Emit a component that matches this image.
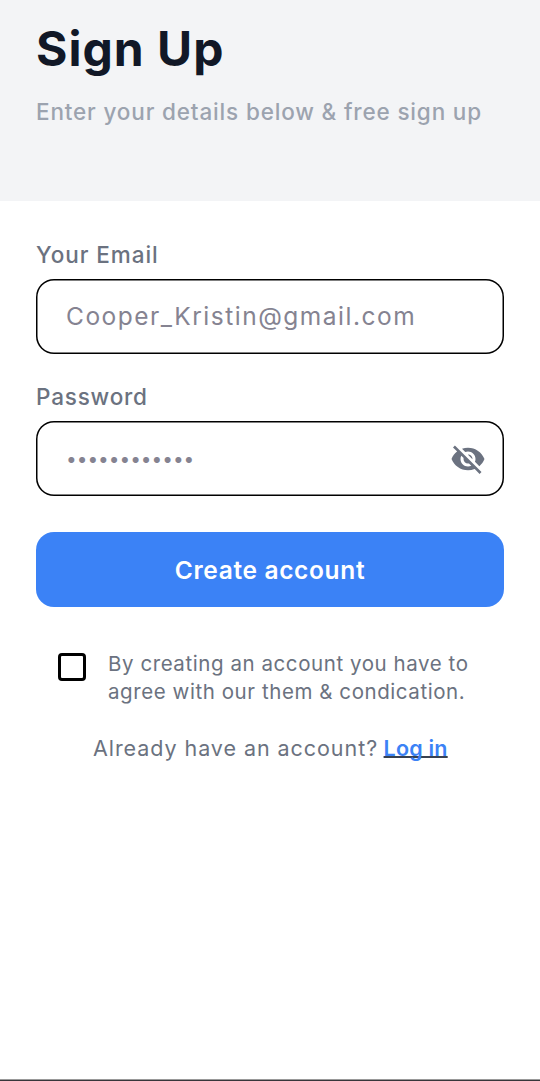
<main>
  <header>
    <h1>Sign Up</h1>
    <p>Enter your details below &amp; free sign up</p>
  </header>
  <form>
    <label for="email">Your Email</label>
    <div class="field" id="email">Cooper_Kristin@gmail.com</div>
    <label class="second" for="password">Password</label>
    <div class="field" id="password">
      <span class="dots">••••••••••••</span>
      <svg viewBox="0 0 24 24" width="36" height="36" aria-hidden="true">
        <path fill="#6b7280" d="M12 7c2.760 0 5 2.240 5 5 0 .65-.13 1.260-.36 1.830l2.920 2.920c1.510-1.260 2.700-2.890 3.430-4.750-1.730-4.390-6-7.500-11-7.500-1.400 0-2.740.25-3.980.7l2.160 2.160C10.740 7.130 11.350 7 12 7zM2 4.270l2.280 2.280.46.46C3.080 8.300 1.780 10.020 1 12c1.730 4.390 6 7.500 11 7.500 1.550 0 3.030-.3 4.380-.84l.42.42L19.730 22 21 20.730 3.270 3 2 4.270zM7.530 9.800l1.550 1.550c-.05.21-.08.43-.08.65 0 1.660 1.340 3 3 3 .22 0 .44-.03.65-.08l1.550 1.550c-.67.33-1.410.53-2.200.53-2.760 0-5-2.240-5-5 0-.79.2-1.530.53-2.200zm4.310-.78l3.150 3.150.02-.16c0-1.660-1.340-3-3-3l-.17.01z" />
      </svg>
    </div>
    <button type="button">Create account</button>
    <div class="terms">
      <span class="box"></span>
      <div>
        <div>By creating an account you have to</div>
        <div>agree with our them &amp; condication.</div>
      </div>
    </div>
    <p class="login"><span>Already have an account?</span><a href="#login">Log in</a></p>
  </form>
  <footer></footer>
</main>

<style>
  :global(body) { margin: 0; background: #fff; }
  main {
    display: flex;
    flex-direction: column;
    height: 1081px;
    overflow: hidden;
    font-family: Inter, "Liberation Sans", sans-serif;
    color: #6b7280;
    white-space: nowrap;
  }
  header { box-sizing: border-box; height: 201px; padding: 18px 36px 0; background: #f3f4f6; }
  h1 { margin: 0; font-size: 48px; line-height: 61px; font-weight: 700; letter-spacing: 1px; color: #111827; }
  header p { margin: 18px 0 0; font-size: 22.5px; line-height: 30px; font-weight: 500; letter-spacing: 0.84px; color: #9ca3af; }
  form { flex: 1; display: flex; flex-direction: column; padding: 39px 36px 0; }
  label { font-size: 22.5px; line-height: 30px; font-weight: 500; letter-spacing: 0.95px; margin-bottom: 8.5px; }
  .second { margin-top: 28.5px; margin-bottom: 9px; letter-spacing: 0.8px; }
  .field {
    box-sizing: border-box;
    height: 75px;
    border-radius: 18px;
    box-shadow: inset 0 0 0 1.5px #000;
    padding: 0 18.5px 0 30px;
    display: flex;
    align-items: center;
    justify-content: space-between;
    font-size: 24.5px;
    letter-spacing: 1.5px;
    color: #858391;
  }
  .dots { font-size: 19px; letter-spacing: 0; padding-top: 1px; }
  button {
    height: 75px;
    margin-top: 36px;
    padding: 1px 0 0;
    border: 0;
    border-radius: 18px;
    background: #3b82f6;
    color: #fff;
    font: 600 24.5px Inter, "Liberation Sans", sans-serif;
    letter-spacing: 0.65px;
  }
  .terms { display: flex; gap: 22px; padding-left: 22px; margin-top: 42.5px; font-size: 20.500px; line-height: 28.5px; letter-spacing: 0.57px; }
  .box { box-sizing: border-box; width: 28px; height: 28px; margin-top: 3.5px; border: 3px solid #000; border-radius: 4px; }
  .login { display: flex; gap: 5.5px; margin: 26.5px 0 0; padding-left: 57px; font-size: 21.5px; line-height: 30px; letter-spacing: 0.94px; }
  a { color: #3b82f6; font-weight: 600; letter-spacing: 0.2px; text-decoration: underline #374151 1.5px; text-underline-offset: 0px; text-decoration-skip-ink: none; }
  footer { height: 1px; border-top: 1px solid #999; background: #37363a; }
</style>
